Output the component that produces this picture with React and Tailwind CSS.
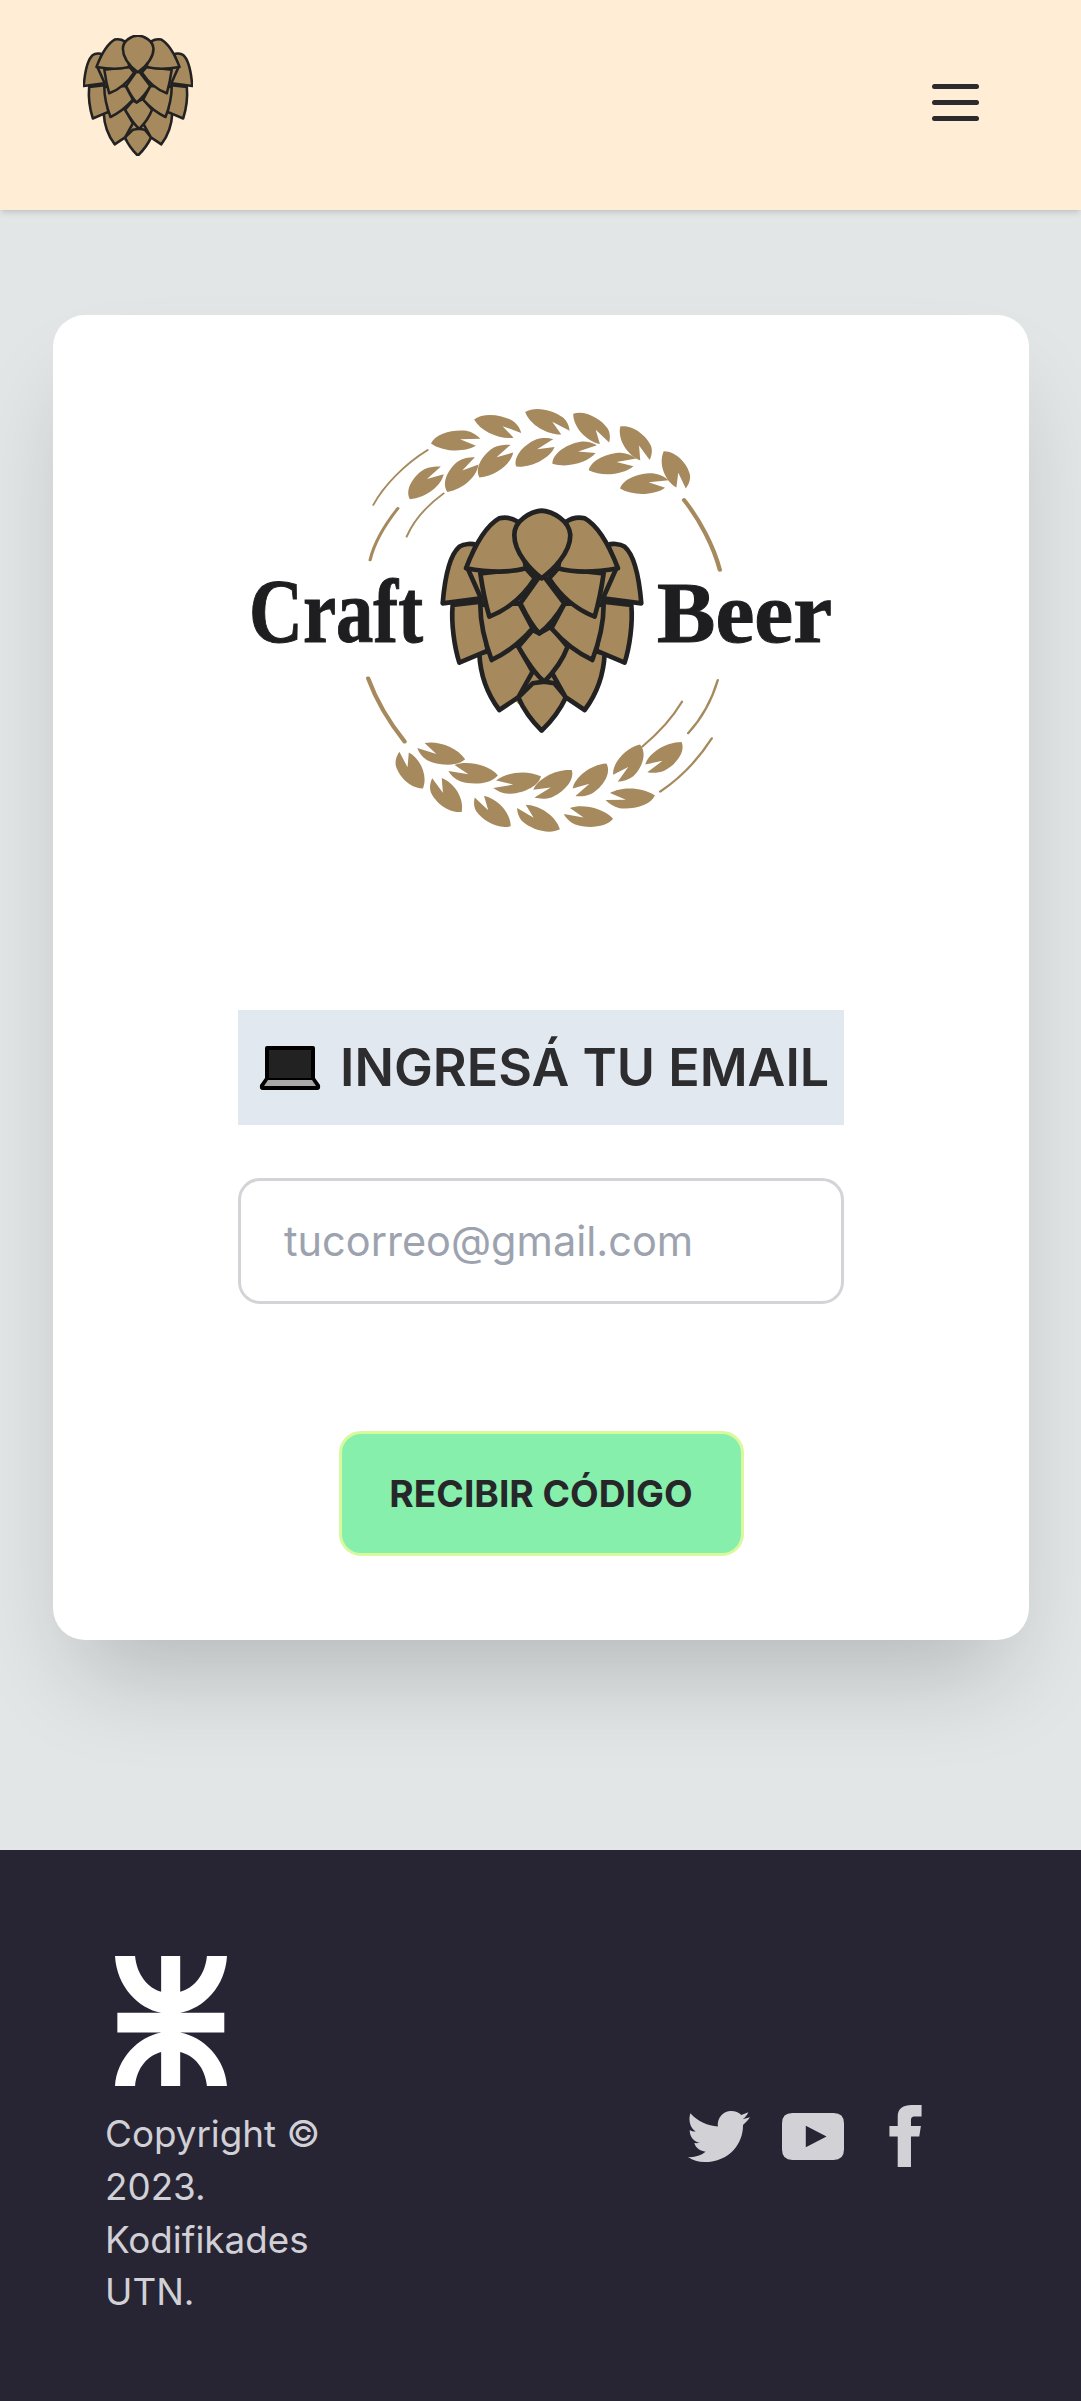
import React from "react";

const HOP_FILL = "#a68a5e";
const HOP_STROKE = "#232222";

function HopShapes({ w }) {
  return (
    <g fill={HOP_FILL} stroke={HOP_STROKE} strokeWidth={w} strokeLinejoin="round">
      <path stroke="none" d="M110 240 L556 240 L520 500 L400 640 L332 700 L260 640 L146 500 Z" />
      <path d="M262 622 L305 580 L340 575 L370 580 L405 622 C385 665 355 700 332 722 C310 700 280 665 262 622 Z" />
      <HopSideBottom />
      <g transform="matrix(-1 0 0 1 666 0)"><HopSideBottom /></g>
      <path d="M262 470 L305 420 L325 430 L360 410 L410 470 C395 510 365 550 340 575 C315 555 285 510 262 470 Z" />
      <HopSideTop />
      <g transform="matrix(-1 0 0 1 666 0)"><HopSideTop /></g>
      <path d="M268 340 L332 250 L400 340 C380 375 350 410 325 430 C310 415 285 375 268 340 Z" />
      <HopSideUpper />
      <g transform="matrix(-1 0 0 1 666 0)"><HopSideUpper /></g>
      <path d="M332 265 C300 240 250 190 250 135 C250 90 300 65 332 62 C365 65 415 90 418 135 C418 190 365 240 332 265 Z" />
    </g>
  );
}

function HopSideBottom() {
  return (
    <>
      <path d="M145 490 C148 560 175 620 205 660 L262 622 L305 545 L260 465 Z" />
      <path d="M65 345 C60 400 70 470 85 518 L170 482 L150 335 Z" />
    </>
  );
}

function HopSideTop() {
  return (
    <>
      <path d="M35 340 C40 280 50 200 85 170 C100 160 125 160 135 165 L110 235 L150 325 Z" />
      <path d="M148 345 C148 400 165 465 182 510 C225 490 270 455 305 415 L265 340 Z" />
    </>
  );
}

function HopSideUpper() {
  return (
    <>
      <path d="M148 250 C155 300 165 345 175 380 C215 365 270 330 312 265 L285 235 Z" />
      <path d="M105 235 C130 170 160 110 205 85 C225 80 245 85 260 95 L285 235 C230 250 160 245 105 235 Z" />
    </>
  );
}

const GRAINS = [
  [565, 155, -5], [670, 110, 20], [795, 95, 28], [905, 115, 45], [1015, 160, 55], [1115, 240, 65],
  [1040, 285, -10], [960, 225, -15], [865, 195, -25], [765, 190, -40], [665, 215, -50], [580, 255, -55], [490, 280, -50],
  [455, 1140, 243], [545, 1215, 235], [660, 1265, 225], [775, 1285, 212], [900, 1278, 188], [1005, 1222, 175],
  [530, 1090, 197], [610, 1148, 187], [720, 1175, 165], [810, 1180, 140], [905, 1168, 130], [1000, 1118, 118], [1090, 1100, 135],
];

function Logo() {
  return (
    <svg width="620" height="460" viewBox="0 0 620 460" className="block">
      <g transform="scale(0.3974 0.3333)">
        {GRAINS.map(([x, y, a], i) => (
          <path
            key={i}
            transform={`translate(${x} ${y}) rotate(${a})`}
            fill={HOP_FILL}
            d="M-62 0 C-48 -30 0 -38 30 -30 C45 -25 56 -14 63 -3 L12 -6 L50 17 C22 34 -32 30 -62 0 Z"
          />
        ))}
        <g fill="none" stroke={HOP_FILL} strokeLinecap="round">
          <path d="M1140 330 C1180 390 1215 470 1230 540" strokeWidth="11" />
          <path d="M495 180 C440 220 385 285 358 345" strokeWidth="5" />
          <path d="M420 355 C390 400 360 460 350 510" strokeWidth="8" />
          <path d="M535 310 C495 345 460 390 442 440" strokeWidth="5" />
          <path d="M345 865 C365 930 400 1000 437 1055" strokeWidth="11" />
          <path d="M1225 870 C1210 930 1185 985 1150 1030" strokeWidth="6" />
          <path d="M1135 935 C1110 985 1075 1030 1035 1070" strokeWidth="6" />
          <path d="M1210 1045 C1175 1110 1130 1165 1080 1205" strokeWidth="6" />
        </g>
      </g>
      <g transform="translate(200 100) scale(0.3333)">
        <HopShapes w="14" />
      </g>
      <text
        x="18"
        y="252"
        fill="#1e1e20"
        stroke="#1e1e20"
        strokeWidth="1"
        fontFamily="'Liberation Serif', serif"
        fontWeight="700"
        fontSize="90"
        textLength="174"
        lengthAdjust="spacingAndGlyphs"
      >
        Craft
      </text>
      <text
        x="426"
        y="252"
        fill="#1e1e20"
        stroke="#1e1e20"
        strokeWidth="1"
        fontFamily="'Liberation Serif', serif"
        fontWeight="700"
        fontSize="86"
        textLength="175"
        lengthAdjust="spacingAndGlyphs"
      >
        Beer
      </text>
    </svg>
  );
}

function Laptop() {
  return (
    <svg width="62" height="46" viewBox="0 0 62 46" className="shrink-0">
      <path d="M6 3 Q6 1 8 1 H54 Q56 1 56 3 V33 L61 40 Q62 45 58 45 H4 Q0 45 1 40 L6 33 Z" fill="#000" />
      <rect x="10" y="5" width="42" height="28" fill="#222" />
      <path d="M9 35 H53 L57 41 H5 Z" fill="#a8a8a8" />
    </svg>
  );
}

function UtnLogo() {
  return (
    <svg width="112" height="130" viewBox="105 108 335 389" className="block ml-[9px]">
      <path
        fill="#fff"
        d="M105 108 H165 C170 165 205 205 243 215 V108 H300 V215 C340 205 375 165 380 108 H440 C435 200 370 265 300 278 H432 V337 H300 C370 350 435 415 440 497 H380 C375 440 340 405 300 395 V497 H243 V395 C205 405 170 440 165 497 H105 C110 415 175 350 243 337 H112 V278 H243 C175 265 110 200 105 108 Z"
      />
    </svg>
  );
}

export default function App() {
  return (
    <div className="font-[Inter,sans-serif] min-h-[2401px] flex flex-col bg-[#e2e6e7]">
      <header className="h-[210px] bg-[#ffedd5] shadow-md flex items-start justify-between pl-[83px] pr-[102px] relative">
        <svg width="110" height="121" viewBox="32 60 602 664" className="mt-[35px]">
          <HopShapes w="14" />
        </svg>
        <div className="mt-[84px] w-[47px] flex flex-col gap-[11px]">
          <div className="h-[5px] rounded-full bg-[#2b2b2e]" />
          <div className="h-[5px] rounded-full bg-[#2b2b2e]" />
          <div className="h-[5px] rounded-full bg-[#2b2b2e]" />
        </div>
      </header>

      <main className="flex-1 pl-[53px] pr-[52px] pt-[105px] pb-[210px]">
        <div className="h-[1325px] bg-white rounded-[32px] shadow-[0_55px_100px_-24px_rgba(0,0,0,0.2)] flex flex-col items-center pt-[75px]">
          <Logo />
          <h2 className="mt-[160px] w-[606px] h-[115px] bg-[#e2e8f0] flex items-center gap-[19px] pl-[21px] text-[52px] font-semibold text-[#2d2d2f] whitespace-nowrap">
            <Laptop />
            <span>INGRESÁ TU EMAIL</span>
          </h2>
          <input
            readOnly
            placeholder="tucorreo@gmail.com"
            className="mt-[53px] w-[606px] h-[126px] rounded-[22px] border-[3px] border-[#d4d4d8] bg-white pl-[43px] text-[41.5px] text-[#2d2d2f] placeholder:text-[#9ca3af] outline-none"
          />
          <button className="mt-[127px] w-[405px] h-[125px] rounded-[22px] border-[3px] border-[#d9f99d] bg-[#86efac] text-[37.2px] font-bold text-[#27272a]">
            RECIBIR CÓDIGO
          </button>
        </div>
      </main>

      <footer className="h-[551px] bg-[#272534] flex justify-between pl-[105px] pr-[159px] pt-[106px]">
        <div className="w-[240px]">
          <div className="pl-px"><UtnLogo /></div>
          <p className="mt-[22px] text-[36.8px] leading-[52.8px] text-[#d1d0d6]">Copyright © 2023. Kodifikades UTN.</p>
        </div>
        <div className="mt-[149px] h-[62px] flex items-center text-[#d1d1d6]">
          <svg width="62" height="51" viewBox="85 93 187 154">
            <path
              fill="currentColor"
              d="M92 100 C115 125 145 138 175 140 C172 115 190 93 215 93 C228 93 238 98 246 105 L267 97 C263 107 257 113 250 118 L272 112 C266 122 258 129 251 135 C252 190 210 247 135 247 C115 247 100 242 85 232 C102 234 122 229 138 216 C122 215 108 205 104 190 C110 191 116 190 120 189 C102 185 90 170 90 150 C95 153 101 155 108 155 C92 145 85 122 92 100 Z"
            />
          </svg>
          <svg width="62" height="47" viewBox="367 100 185 140" className="ml-[32px]">
            <path
              fill="currentColor"
              fillRule="evenodd"
              d="M398 100 H521 Q552 100 552 131 V209 Q552 240 521 240 H398 Q367 240 367 209 V131 Q367 100 398 100 Z M438 138 V202 L500 170 Z"
            />
          </svg>
          <svg width="33" height="62" viewBox="688 75 97 187" className="ml-[45px]">
            <path
              fill="currentColor"
              d="M713 262 V170 H688 V138 H713 V110 C713 85 730 75 755 75 H785 V110 H765 C755 110 753 115 753 122 V138 H783 L778 170 H753 V262 Z"
            />
          </svg>
        </div>
      </footer>
    </div>
  );
}
